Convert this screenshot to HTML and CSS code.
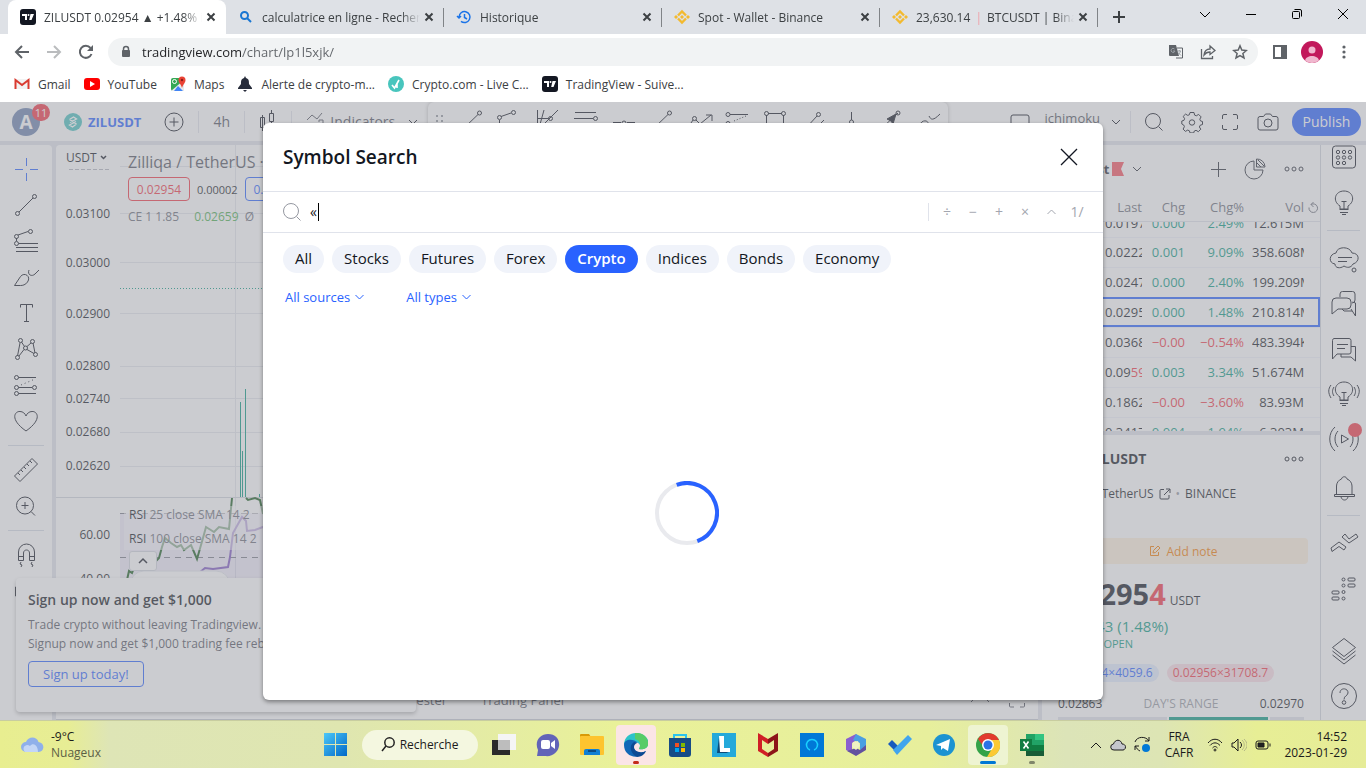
FILE: index.html
```
<!DOCTYPE html>
<html lang="en">
<head>
    <meta charset="utf-8">
    <title>ZILUSDT 0.02954</title>
    <link rel="stylesheet" href="styles.css">
</head>
<body>
    <!-- Browser tabs -->
    <div class="tab-strip">
        <button class="tab active">
            <svg class="fav" viewBox="0 0 16 16"><rect width="16" height="16" rx="3" fill="#131722"/><path d="M2 5h5v6H5V7H2zM10.500 5H14l-2.500 6H9.200z" fill="#fff"/><circle cx="8.500" cy="6" r="1" fill="#fff"/></svg>
            <span class="tab-title">ZILUSDT 0.02954 ▲ +1.48% ichimoku</span>
            <svg class="tab-close" viewBox="0 0 10 10"><path d="M1.500 1.500l7 7M8.500 1.500l-7 7"/></svg>
        </button>
        <button class="tab">
            <svg class="fav" viewBox="0 0 16 16"><circle cx="6.500" cy="6.500" r="3.500" fill="none" stroke="#1976d2" stroke-width="2"/><path d="M9 9l4 4" stroke="#1976d2" stroke-width="2"/></svg>
            <span class="tab-title">calculatrice en ligne - Recherche</span>
            <svg class="tab-close" viewBox="0 0 10 10"><path d="M1.500 1.500l7 7M8.500 1.500l-7 7"/></svg>
        </button>
        <button class="tab">
            <svg class="fav" viewBox="0 0 16 16" fill="none" stroke="#1a73e8" stroke-width="1.500"><path d="M3 8a5.500 5.500 0 1 1 2 4.300M1 7l2 2 2-2M8.500 5v3.500l2.500 1.500"/></svg>
            <span class="tab-title">Historique</span>
            <svg class="tab-close" viewBox="0 0 10 10"><path d="M1.500 1.500l7 7M8.500 1.500l-7 7"/></svg>
        </button>
        <button class="tab">
            <svg class="fav" viewBox="0 0 16 16"><g fill="none" stroke="#f3ba2f" stroke-width="2.400"><path d="M4 6.500l4-4 4 4M4 9.500l4 4 4-4"/></g><path d="M8 6l2 2-2 2-2-2zM2 6l2 2-2 2-2-2zM14 6l2 2-2 2-2-2z" fill="#f3ba2f"/></svg>
            <span class="tab-title">Spot - Wallet - Binance</span>
            <svg class="tab-close" viewBox="0 0 10 10"><path d="M1.500 1.500l7 7M8.500 1.500l-7 7"/></svg>
        </button>
        <button class="tab">
            <svg class="fav" viewBox="0 0 16 16"><g fill="none" stroke="#f3ba2f" stroke-width="2.400"><path d="M4 6.500l4-4 4 4M4 9.500l4 4 4-4"/></g><path d="M8 6l2 2-2 2-2-2zM2 6l2 2-2 2-2-2zM14 6l2 2-2 2-2-2z" fill="#f3ba2f"/></svg>
            <span class="tab-title">23,630.14 <i class="pink">|</i> BTCUSDT | Binance</span>
            <svg class="tab-close" viewBox="0 0 10 10"><path d="M1.500 1.500l7 7M8.500 1.500l-7 7"/></svg>
        </button>
        <button class="new-tab" aria-label="New tab"><svg width="14" height="14" viewBox="0 0 14 14"><path d="M7 1v12M1 7h12" stroke="#3c4043" stroke-width="2"/></svg></button>
        <div class="window-controls">
            <button aria-label="Tabs"><svg width="12" height="12" viewBox="0 0 12 12"><path d="M1 4l5 5 5-5"/></svg></button>
            <button aria-label="Minimize"><svg width="12" height="12" viewBox="0 0 12 12"><path d="M1 6.500h10"/></svg></button>
            <button aria-label="Restore"><svg width="12" height="12" viewBox="0 0 12 12"><rect x="1.500" y="3.500" width="7" height="7" rx="1"/><path d="M3.500 1.500H9a1.500 1.500 0 0 1 1.500 1.500v5.500"/></svg></button>
            <button aria-label="Close"><svg width="12" height="12" viewBox="0 0 12 12"><path d="M1 1l10 10M11 1L1 11"/></svg></button>
        </div>
    </div>

    <div class="toolbar">
        <button aria-label="Back"><svg width="16" height="16" viewBox="0 0 16 16"><path d="M15 8H2M8 2L2 8l6 6" fill="none" stroke="#5f6368" stroke-width="2"/></svg></button>
        <button aria-label="Forward"><svg width="16" height="16" viewBox="0 0 16 16"><path d="M1 8h13M8 2l6 6-6 6" fill="none" stroke="#babcbe" stroke-width="2"/></svg></button>
        <button aria-label="Reload"><svg width="16" height="16" viewBox="0 0 16 16"><path d="M13.500 10A6 6 0 1 1 12.500 4" fill="none" stroke="#5f6368" stroke-width="2"/><path d="M15 1v6H9z" fill="#5f6368"/></svg></button>
        <div class="address">
            <svg width="12" height="14" viewBox="0 0 12 14"><rect x="2" y="5" width="8" height="7" rx="1" fill="#5f6368"/><path d="M3.500 6V4a2.500 2.500 0 0 1 5 0v2" fill="none" stroke="#5f6368" stroke-width="1.500"/></svg>
            <input class="url" type="text" aria-label="Address" value="tradingview.com/chart/lp1l5xjk/">
            <button aria-label="Translate"><svg width="16" height="16" viewBox="0 0 16 16"><path d="M1 1h7l3 11H2a1 1 0 0 1-1-1z" fill="#5f6368"/><path d="M9 4h5.500v10H8" fill="none" stroke="#5f6368"/><path d="M6.500 5A2 2 0 1 0 7 7H5M9.500 7H13M12.500 7c-.5 2-1.500 3-2.500 3.500M10 8.500l3 3M11.300 6v1" fill="none" stroke="#9aa0a6"/></svg></button>
            <button aria-label="Share"><svg width="16" height="16" viewBox="0 0 16 16"><path d="M1.500 5v9.500h11V12M4 11c.5-4 3-6 6-6V2l5 4.500-5 4V8c-3 0-4.500 1-6 3z" fill="none" stroke="#5f6368" stroke-width="1.300"/></svg></button>
            <button aria-label="Bookmark"><svg width="16" height="16" viewBox="0 0 16 16"><path d="M8 1.800l1.800 4.300 4.600.4-3.500 3 1.100 4.500L8 11.600 4 14l1.100-4.500-3.500-3 4.600-.4z" fill="none" stroke="#5f6368" stroke-width="1.500"/></svg></button>
        </div>
        <button aria-label="Side panel"><svg width="16" height="16" viewBox="0 0 16 16"><rect x="2" y="2" width="12" height="12" fill="none" stroke="#5f6368" stroke-width="2"/><rect x="9" y="2" width="5" height="12" fill="#5f6368"/></svg></button>
        <button aria-label="Profile"><svg width="22" height="22" viewBox="0 0 22 22"><circle cx="11" cy="11" r="11" fill="#c2185b"/><circle cx="11" cy="9" r="3.500" fill="#f0b7ce"/><path d="M4 19.500c1-6 13-6 14 0a11 11 0 0 1-14 0z" fill="#f0b7ce"/></svg></button>
        <button aria-label="Menu"><svg width="16" height="16" viewBox="0 0 16 16" fill="#5f6368"><circle cx="8" cy="3" r="1.600"/><circle cx="8" cy="8" r="1.600"/><circle cx="8" cy="13" r="1.600"/></svg></button>
    </div>

    <nav class="bookmarks">
        <a href="#"><svg width="16" height="16" viewBox="0 0 16 16"><path d="M1 3h14v10H1z" fill="#f2f2f2"/><path d="M1.500 13V4L8 9l6.500-5v9" fill="none" stroke="#d93a30" stroke-width="2"/></svg>Gmail</a>
        <a href="#"><svg width="16" height="16" viewBox="0 0 16 16"><rect y="2" width="16" height="12" rx="3" fill="#f00"/><path d="M6 5l5 3-5 3z" fill="#fff"/></svg>YouTube</a>
        <a href="#"><svg width="16" height="16" viewBox="0 0 16 16"><rect x="1" y="2" width="13" height="13" rx="2" fill="#34a853"/><path d="M1 15L14 4v11z" fill="#e8eaed"/><path d="M4 15l4-5 5 5z" fill="#4285f4"/><circle cx="4.500" cy="5.500" r="2" fill="none" stroke="#fff"/><path d="M12 12C11 8 8.500 7 8.500 4a3.500 3.500 0 0 1 7 0c0 3-2.500 4-3.500 8z" fill="#ea4335"/><circle cx="12" cy="4" r="1.200" fill="#8c1d18"/></svg>Maps</a>
        <a href="#"><svg width="16" height="16" viewBox="0 0 16 16"><path d="M8 0l1 2c3 1 3 3 3 6l3 4v1H1v-1l3-4c0-3 0-5 3-6zM6 14h4l-2 2z" fill="#262b3a"/></svg>Alerte de crypto-m...</a>
        <a href="#"><svg width="16" height="16" viewBox="0 0 16 16"><circle cx="8" cy="8" r="8" fill="#48c5bd"/><path d="M4 9l2.500 3L11 4M9 12V8" fill="none" stroke="#fff" stroke-width="1.600"/></svg>Crypto.com - Live C...</a>
        <a href="#"><svg width="16" height="16" viewBox="0 0 16 16"><rect width="16" height="16" rx="3" fill="#131722"/><path d="M2 5h5v6H5V7H2zM10.500 5H14l-2.500 6H9.200z" fill="#fff"/><circle cx="8.500" cy="6" r="1" fill="#fff"/></svg>TradingView - Suive...</a>
    </nav>

    <div class="app">
        <header class="app-header">
            <button class="avatar">A<span class="badge">11</span></button>
            <button class="symbol"><svg width="18" height="18" viewBox="0 0 18 18"><circle cx="9" cy="9" r="9" fill="#49c1bf"/><path d="M5.500 6.500l4-2.500 3 2-6.500 3.500M12.500 11l-4 3-3-2 6.500-3.500M5.500 6.500l7 4.500" fill="none" stroke="#fff" stroke-width="1.300"/></svg>ZILUSDT</button>
            <button class="add" aria-label="Compare"><svg width="20" height="20" viewBox="0 0 20 20"><circle cx="10" cy="10" r="9"/><path d="M10 5.500v9M5.500 10h9"/></svg></button>
            <i class="sep"></i>
            <button class="interval">4h</button>
            <i class="sep"></i>
            <button class="candles" aria-label="Candles"><svg width="28" height="28" viewBox="0 0 28 28"><path d="M8.500 7v16M6.500 9.500h4v10h-4zM17.500 2v3M17.500 13v5M15.500 5.500h4v8h-4z" /></svg></button>
            <i class="sep"></i>
            <button class="indicators"><svg width="28" height="28" viewBox="0 0 28 28"><path d="M5 12l5-5 5 4 5-6M17 14v-2h4v8M5 20l4-4"/></svg>Indicators</button>
            <svg class="chev" width="10" height="10" viewBox="0 0 10 10"><path d="M1 3l4 4 4-4"/></svg>
            <div class="fav-tools">
                <svg class="grip" width="8" height="14" viewBox="0 0 8 14"><path d="M0 0h2v2H0zM5 0h2v2H5zM0 5h2v2H0zM5 5h2v2H5zM0 10h2v2H0zM5 10h2v2H5z" stroke="none" fill="#9598a1"/></svg>
                <button aria-label="Trend line"><svg width="28" height="28" viewBox="0 0 28 28"><path d="M20 6.500L6 20"/><circle cx="21.500" cy="5" r="2"/></svg></button>
                <button aria-label="Pitchfork"><svg width="28" height="28" viewBox="0 0 28 28"><path d="M5 8.500l10-3.500M3.500 12v8"/><circle cx="3.500" cy="9.500" r="2"/><circle cx="17.500" cy="4.500" r="2"/></svg></button>
                <button aria-label="Gann"><svg width="28" height="28" viewBox="0 0 28 28"><path d="M3.500 2v18M10 2L5 20M3.500 10.500h11M24 2L8 18"/><circle cx="16.500" cy="10.500" r="2"/></svg></button>
                <button aria-label="Channel"><svg width="28" height="28" viewBox="0 0 28 28"><path d="M3 4.500h21M2 10.500h19"/><circle cx="23.500" cy="10.500" r="2"/></svg></button>
                <button aria-label="Horizontal line"><svg width="28" height="28" viewBox="0 0 28 28"><path d="M3 14.500h8M17 14.500h8"/><circle cx="14" cy="15" r="2"/></svg></button>
                <button aria-label="Ray"><svg width="28" height="28" viewBox="0 0 28 28"><path d="M20 6.500L6 20"/><circle cx="21.500" cy="5" r="2"/></svg></button>
                <button aria-label="Elliott"><svg width="28" height="28" viewBox="0 0 28 28"><path d="M7 12l-4 6M10 12l4 4L25 7M20 7h6v6"/><circle cx="8.500" cy="10.500" r="2"/></svg></button>
                <button aria-label="Fib"><svg width="28" height="28" viewBox="0 0 28 28"><path d="M6 6.500h18M6 15.500h10"/><path d="M10 13l12-5" stroke-dasharray="1 2"/><circle cx="4" cy="6.500" r="2"/><circle cx="4" cy="15.500" r="2"/></svg></button>
                <button aria-label="Rectangle"><svg width="28" height="28" viewBox="0 0 28 28"><path d="M6 5.500h14M4.500 7v14M21.500 7v14"/><circle cx="4.500" cy="5.500" r="2"/><circle cx="21.500" cy="5.500" r="2"/></svg></button>
                <button aria-label="Parallel"><svg width="28" height="28" viewBox="0 0 28 28"><path d="M17 8L6 20M24 12l-8 8"/><circle cx="18.500" cy="6.500" r="2"/></svg></button>
                <button aria-label="Vertical line"><svg width="28" height="28" viewBox="0 0 28 28"><path d="M13.500 4v8"/><circle cx="13.500" cy="14" r="2"/></svg></button>
                <button aria-label="Arrow"><svg width="28" height="28" viewBox="0 0 28 28"><path d="M6 20L22 5"/><path d="M20 6l-3 10-2-3-4-2z" fill="#131722"/><circle cx="22" cy="5" r="2"/></svg></button>
                <button aria-label="Brush"><svg width="28" height="28" viewBox="0 0 28 28"><path d="M5 20c1-9 9-8 9-5M15 8c2 4 4 5 11-2"/></svg></button>
            </div>
            <svg class="layout" width="20" height="16" viewBox="0 0 20 16"><rect x="1" y="1" width="18" height="14" rx="2"/></svg>
            <button class="layout-name">ichimoku</button>
            <svg class="chev" width="10" height="10" viewBox="0 0 10 10"><path d="M1 3l4 4 4-4"/></svg>
            <i class="sep"></i>
            <button aria-label="Search"><svg width="20" height="20" viewBox="0 0 20 20"><circle cx="9" cy="9" r="7.500"/><path d="M14.500 14.500l4 4"/></svg></button>
            <button aria-label="Settings"><svg width="22" height="22" viewBox="0 0 22 22"><path d="M9 1.500h4l.6 2.600 1.700.7 2.300-1.400 2.500 2.500-1.300 2.300.7 1.700 2 .6v3l-2.400.8-.7 1.700 1.400 2.200-2.500 2.500-2.300-1.400-1.700.7-.6 1.900H9l-.6-2.100-1.700-.7-2.300 1.300-2.300-2.300 1.300-2.400-.7-1.700L.8 13v-3l2.100-.6.7-1.700-1.400-2.300 2.300-2.300 2.300 1.300 1.600-.7z"/><circle cx="11" cy="11.500" r="2.700"/></svg></button>
            <button aria-label="Fullscreen"><svg width="18" height="18" viewBox="0 0 18 18"><path d="M1.500 6V3a1.500 1.500 0 0 1 1.500-1.500h3M12 1.500h3A1.500 1.500 0 0 1 16.500 3v3M16.500 12v3a1.500 1.500 0 0 1-1.500 1.500h-3M6 16.500H3A1.500 1.500 0 0 1 1.500 15v-3"/></svg></button>
            <button aria-label="Snapshot"><svg width="22" height="18" viewBox="0 0 22 18"><path d="M3 3.500h3.500l2-2.500h5l2 2.500H19a2 2 0 0 1 2 2V15a2 2 0 0 1-2 2H3a2 2 0 0 1-2-2V5.500a2 2 0 0 1 2-2z"/><circle cx="11" cy="10" r="4"/></svg></button>
            <button class="publish">Publish</button>
        </header>

        <div class="app-body">
            <aside class="draw-bar">
                <button aria-label="Cross"><svg width="28" height="28" viewBox="0 0 28 28" class="blue"><path d="M14.500 3v8M14.500 18v8M3 14.500h8M18 14.500h8"/></svg></button>
                <button aria-label="Trend line"><svg width="28" height="28" viewBox="0 0 28 28"><path d="M7 21L21 7"/><circle cx="5.500" cy="22.500" r="2"/><circle cx="22.500" cy="5.500" r="2"/></svg></button>
                <button aria-label="Fib"><svg width="28" height="28" viewBox="0 0 28 28"><path d="M6 8l10-3.500M4.500 11v3M6.500 16.500H26M4 20.500h22M4 24.500h22"/><circle cx="4.500" cy="9.500" r="2"/><circle cx="18.500" cy="4.500" r="2"/><circle cx="4.500" cy="16.500" r="2"/></svg></button>
                <button aria-label="Brush"><svg width="28" height="28" viewBox="0 0 28 28"><path d="M2.500 22.500l6-9c4-5 11 0 7 5.500-2 3-5 3.500-7 3.500zM17 7c-2 5 3 7 6 4l4-4"/></svg></button>
                <button aria-label="Text"><svg width="28" height="28" viewBox="0 0 28 28"><path d="M8.500 8.500v-3h12v3M14.500 5.500v17M12 22.500h5"/></svg></button>
                <button aria-label="Patterns"><svg width="28" height="28" viewBox="0 0 28 28"><path d="M8 8L5.500 21M9.500 7l3 4.500M15 14.500l7 4M7 21l5-6.500M15 11.500L19 8M21 8l2 10"/><circle cx="8.500" cy="5.500" r="2"/><circle cx="20.500" cy="6.500" r="2"/><circle cx="5.500" cy="22.500" r="2"/><circle cx="23.500" cy="19.500" r="2"/><circle cx="13.500" cy="13" r="2"/></svg></button>
                <button aria-label="Prediction"><svg width="28" height="28" viewBox="0 0 28 28"><path d="M6.500 6.500H24M6.500 16.500H20M6.500 22.500H24"/><path d="M9 14l14-6" stroke-dasharray="1 3"/><circle cx="4.500" cy="6.500" r="2"/><circle cx="4.500" cy="16.500" r="2"/><circle cx="22.500" cy="16.500" r="2"/><circle cx="4.500" cy="22.500" r="2"/></svg></button>
                <button aria-label="Icons"><svg width="28" height="28" viewBox="0 0 28 28"><path d="M14 24C-3 12 3 4 8 4.500c3 0 5 2 6 4.500 1-2.500 3-4.500 6-4.500 5-.5 11 7.500-6 19.500z"/></svg></button>
                <hr>
                <button aria-label="Measure"><svg width="28" height="28" viewBox="0 0 28 28"><path d="M2.500 20L20 2.500l5.500 5.500L8 25.500zM6 17l2 2M9 14l2 2M12 11l2 2M15 8l2 2M18 5l2 2"/></svg></button>
                <button aria-label="Zoom"><svg width="28" height="28" viewBox="0 0 28 28"><circle cx="13" cy="13.500" r="8.500"/><path d="M13 10v7M9.500 13.500h7M19 19.500l4 4"/></svg></button>
                <hr>
                <button aria-label="Magnet"><svg width="28" height="28" viewBox="0 0 28 28"><path d="M6.500 19.500V11a8 8 0 0 1 16 0v8.500h-5V12c0-4-6-4-6 0v7.500zM6.500 15.500h5M17.500 15.500h5M9 21l-1 2 2 1-1 2M20 21l-1 2 2 1-1 2"/></svg></button>
                <button aria-label="Lock"><svg width="28" height="28" viewBox="0 0 28 28"><path d="M3.500 10v9h20v-9zM8 10V7"/></svg></button>
            </aside>

            <main class="chart">
                <div class="panes">
                    <svg class="plot" width="982" height="548" viewBox="56 145 982 548">
                        <g stroke="#e4e6ec">
                            <path d="M120 166.500h918M120 213.500h918M120 262.500h918M120 313.500h918M120 366.500h918M120 398.500h918M120 432.500h918M120 466.500h918M235.500 145v548"/>
                            <path d="M56 497.500h982" stroke="#d1d4dc"/>
                        </g>
                        <path d="M69 169.500h41" stroke="#b2b5be" stroke-dasharray="4 2"/>
                        <path d="M120 288.500h918" stroke="#089981" stroke-dasharray="1 2"/>
                        <path d="M240.500 402v95M242.500 451v46M245.500 389v108M259.500 494v3" stroke="#089981"/>
                        <rect x="120" y="513" width="918" height="110" fill="#7e57c2" opacity=".12" stroke="none"/>
                        <path d="M120 513.500h918M120 557.500h918" stroke="#787b86" stroke-dasharray="6 5"/>
                        <path class="rsi" stroke="#1b5e20" d="M127 580l2-9 3 2 8-21h10l7 8 2-2 3-11 3-9 6 5 6 4 4-2 3 5 7-5 6 14 6-21 3-11 8 5 5-5 10 2 3-31M246 498l2 2 7-2 5 2 3 14"/>
                        <path class="rsi" stroke="#7e57c2" d="M199 573l6-5 8 1 15-2 2-10 3-24 9-16 4 4 1 10 8-1 8-3 4 3"/>
                        <rect x="124" y="506" width="142" height="44" fill="#fff" opacity=".5" stroke="none"/>
                        <rect x="130" y="571" width="100" height="40" rx="14" fill="#fff" stroke="#e0e3eb"/>
                        <g class="axis">
                            <text x="110" y="218">0.03100</text><text x="110" y="267">0.03000</text><text x="110" y="318">0.02900</text><text x="110" y="370">0.02800</text><text x="110" y="403">0.02740</text><text x="110" y="436">0.02680</text><text x="110" y="470">0.02620</text><text x="110" y="539">60.00</text><text x="110" y="583">40.00</text>
                        </g>
                    </svg>
                    <button class="currency">USDT<svg width="7" height="7" viewBox="0 0 7 7"><path d="M1 2l2.500 2.500L6 2" stroke-width="1.500"/></svg></button>
                    <div class="legend">
                        <div class="legend-title">Zilliqa / TetherUS ·</div>
                        <div class="quotes"><button class="sell">0.02954</button><span>0.00002</span><button class="buy">0.02956</button></div>
                        <div class="study"><span>CE</span> 1 1.85 <b>0.02659</b> Ø</div>
                    </div>
                    <div class="rsi-legend">
                        <div>RSI <span>25 close SMA 14 2</span></div>
                        <div>RSI <span>100 close SMA 14 2</span></div>
                        <button class="collapse" aria-label="Collapse"><svg width="10" height="10" viewBox="0 0 10 10"><path d="M1 7l4-4 4 4" stroke-width="1.500"/></svg></button>
                    </div>
                </div>
                <div class="bottom-bar">
                    <button>Strategy Tester</button><button>Trading Panel</button>
                    <svg class="up" width="20" height="20" viewBox="0 0 20 20"><path d="M1 12l9-9 9 9"/></svg>
                    <svg width="18" height="18" viewBox="0 0 18 18"><path d="M1.500 6V1.500H6M12 1.500h4.500V6M16.500 12v3a1 1 0 0 1-1 1H12M6 16H2.500a1 1 0 0 1-1-1v-3"/></svg>
                </div>
            </main>

            <section class="widget">
                <div class="watch-head">
                    <b>Watchlist</b>
                    <svg width="12" height="14" viewBox="0 0 12 14"><path d="M0 0h12L9 7l3 7H0z" fill="#f7525f" stroke="none"/></svg>
                    <svg class="chev" width="10" height="10" viewBox="0 0 10 10"><path d="M1 3l4 4 4-4"/></svg>
                    <svg class="plus" width="16" height="16" viewBox="0 0 16 16"><path d="M8.500 1v15M1 8.500h15"/></svg>
                    <svg width="22" height="22" viewBox="0 0 22 22"><path d="M10 3a9 9 0 1 0 9 9h-9z"/><path d="M12.500 1v8H21a8 8 0 0 0-8.500-8zM13 5l4 4M14 2l6 6"/></svg>
                    <svg width="20" height="8" viewBox="0 0 20 8"><circle cx="3" cy="4" r="2"/><circle cx="10" cy="4" r="2"/><circle cx="17" cy="4" r="2"/></svg>
                </div>
                <table class="watchlist">
                    <thead><tr><th></th><th>Last</th><th>Chg</th><th>Chg%</th><th>Vol</th><th><svg width="11" height="12" viewBox="0 0 11 12"><path d="M3 3.500a4.300 4.300 0 1 1-2 3M5.500 1L3 3.500 5.500 6"/></svg></th></tr></thead>
                    <tbody>
                        <tr class="cut top"><td></td><td><span>0.01975</span></td><td class="up"><span>0.000</span></td><td class="up"><span>2.49%</span></td><td><span>12.615M</span></td><td></td></tr>
                        <tr><td></td><td><span>0.02225</span></td><td class="up"><span>0.001</span></td><td class="up"><span>9.09%</span></td><td><span>358.608M</span></td><td></td></tr>
                        <tr><td></td><td><span>0.02475</span></td><td class="up"><span>0.000</span></td><td class="up"><span>2.40%</span></td><td><span>199.209M</span></td><td></td></tr>
                        <tr class="selected"><td></td><td><span>0.02954</span></td><td class="up"><span>0.000</span></td><td class="up"><span>1.48%</span></td><td><span>210.814M</span></td><td></td></tr>
                        <tr><td></td><td><span>0.03685</span></td><td class="down"><span>−0.00</span></td><td class="down"><span>−0.54%</span></td><td><span>483.394K</span></td><td></td></tr>
                        <tr><td></td><td><span>0.09<em>59</em></span></td><td class="up"><span>0.003</span></td><td class="up"><span>3.34%</span></td><td><span>51.674M</span></td><td></td></tr>
                        <tr><td></td><td><span>0.18625</span></td><td class="down"><span>−0.00</span></td><td class="down"><span>−3.60%</span></td><td><span>83.93M</span></td><td></td></tr>
                        <tr class="cut"><td></td><td><span>0.34175</span></td><td class="up"><span>0.004</span></td><td class="up"><span>1.94%</span></td><td><span>6.303M</span></td><td></td></tr>
                    </tbody>
                </table>
                <div class="details">
                    <div class="d-head"><b>ZILUSDT</b><svg width="20" height="8" viewBox="0 0 20 8"><circle cx="3" cy="4" r="2"/><circle cx="10" cy="4" r="2"/><circle cx="17" cy="4" r="2"/></svg></div>
                    <div class="d-name">Zilliqa / TetherUS <svg width="12" height="12" viewBox="0 0 12 12"><path d="M5 1.500H2a1 1 0 0 0-1 1V10a1 1 0 0 0 1 1h7a1 1 0 0 0 1-1V7M7 1h4v4M11 1L5 7"/></svg> <i>•</i> BINANCE</div>
                    <button class="note"><svg width="12" height="12" viewBox="0 0 12 12"><path d="M5 1.500H1.500v9h8V7M4 8l.5-2.500L9 1l2 2-4.500 4.500z"/></svg>Add note</button>
                    <div class="price">0.0295<em>4</em><small>USDT</small></div>
                    <div class="change">0.00043 (1.48%)</div>
                    <div class="market">MARKET OPEN</div>
                    <div class="book"><span class="bid">0.02954×4059.6</span><span class="ask">0.02956×31708.7</span></div>
                    <div class="range"><span>0.02863</span><i>DAY'S RANGE</i><span>0.02970</span></div>
                    <div class="range-bar"><i></i></div>
                </div>
            </section>

            <aside class="side-bar">
                <button aria-label="Calendar"><svg width="28" height="28" viewBox="0 0 28 28"><rect x="2.500" y="3" width="23" height="22" rx="3"/><circle cx="8" cy="9" r="1.700"/><circle cx="14" cy="9" r="1.700"/><circle cx="20" cy="9" r="1.700"/><circle cx="8" cy="14.500" r="1.700"/><circle cx="14" cy="14.500" r="1.700"/><circle cx="20" cy="14.500" r="1.700"/><circle cx="8" cy="20" r="1.700"/><circle cx="14" cy="20" r="1.700"/></svg></button>
                <button aria-label="Ideas"><svg width="28" height="28" viewBox="0 0 28 28"><path d="M10 20v-3c-8-5-5-15 4-15s12 10 4 15v3zM14 20v-8M11.500 12.500h5M9.500 20.500h9M10 23.500h8M12 25.500h4"/></svg></button>
                <hr>
                <button aria-label="Minds"><svg width="30" height="28" viewBox="0 0 30 28"><path d="M7 8c1-7 14-7 16 0 8 0 8 9 1 11-2 4-6 4-9 2-4 3-9 2-9-2-7-1-6-10 1-11zM9 12.500h14M9 16.500h9"/><circle cx="25" cy="25" r="2"/></svg></button>
                <button aria-label="Chats"><svg width="28" height="28" viewBox="0 0 28 28"><path d="M10 7V4a2.500 2.500 0 0 1 2.500-2.500h10A2.500 2.500 0 0 1 25 4v6a3 3 0 0 1-3 3M6 8h11a4 4 0 0 1 4 4v3a4 4 0 0 1-4 4H8l-6 5V12a4 4 0 0 1 4-4zM21 19l4.500 7V13l-3-1M12 19l2 2h8"/></svg></button>
                <button aria-label="Chat"><svg width="28" height="28" viewBox="0 0 28 28"><path d="M4 3.500h15a2 2 0 0 1 2 2V17a2 2 0 0 1-2 2H7l-4.500 5V5.500a2 2 0 0 1 1.500-2zM7 9.500h11M7 13.500h8M21 11.500h4.500V26L21 22H11v-3"/></svg></button>
                <button aria-label="Stream ideas"><svg width="32" height="28" viewBox="0 0 32 28"><path d="M12 20v-3c-8-5-5-15 4-15s12 10 4 15v3zM16 20v-8M13.500 12.500h5M11.500 20.500h9M12 23.500h8M14 25.500h4M3 5c-3 4-3 8 0 13M6 7c-2 3-2 6 0 9M29 5c3 4 3 8 0 13M26 7c2 3 2 6 0 9"/></svg></button>
                <button aria-label="Streams" class="streams"><svg width="32" height="28" viewBox="0 0 32 28"><path d="M13.500 10v8l7-4zM7 2C0 8 0 20 7 26M10 6c-4 4-4 12 0 16M25 2c7 6 7 18 0 24M22 6c4 4 4 12 0 16"/></svg><span class="dot"></span></button>
                <button aria-label="Notifications" class="bell"><svg width="28" height="28" viewBox="0 0 28 28"><path d="M6.500 20.500V12c0-3 2-6 5-7 .5-3 5-3 5.500 0 3 1 5 4 5 7v8.500M4.500 20.500h20v2h-20zM11 23c1 4 6 4 7 0"/></svg></button>
                <hr>
                <button aria-label="Order"><svg width="30" height="28" viewBox="0 0 30 28"><path d="M2 18l8-6 7 5-2 3-5-3.500-7 5zM13 7l7 6 9-6-2-3-7 5-4-5z"/></svg></button>
                <button aria-label="DOM"><svg width="28" height="28" viewBox="0 0 28 28"><rect x="18" y="3" width="7" height="3" rx="1"/><rect x="18" y="9" width="7" height="3" rx="1"/><rect x="2" y="16" width="7" height="3" rx="1"/><rect x="2" y="22" width="7" height="3" rx="1"/><circle cx="13.500" cy="4.500" r="1.500"/><circle cx="13.500" cy="10.500" r="1.500"/><circle cx="13.500" cy="17" r="1.500"/><circle cx="13.500" cy="23.500" r="1.500"/></svg></button>
                <button aria-label="Objects" class="last"><svg width="28" height="28" viewBox="0 0 28 28"><path d="M14 1.500l11.500 9L14 19.500 2.500 10.500zM2.500 14L14 23l11.500-9M2.500 18L14 27l11.500-9"/></svg></button>
                <button aria-label="Help"><svg width="28" height="28" viewBox="0 0 28 28"><circle cx="14" cy="14" r="12.500"/><path d="M10 11c0-6 8.500-5 8 0-.3 3-4 2.500-4 6.500"/><circle cx="14" cy="20.500" r="1.800"/></svg></button>
            </aside>
        </div>

        <div class="toast">
            <b>Sign up now and get $1,000</b>
            <p>Trade crypto without leaving Tradingview.<br>Signup now and get $1,000 trading fee rebate.</p>
            <button>Sign up today!</button>
        </div>

        <div class="backdrop">
            <div class="modal" role="dialog" aria-label="Symbol Search">
                <div class="modal-header">
                    <h2>Symbol Search</h2>
                    <button aria-label="Close"><svg width="18" height="18" viewBox="0 0 18 18"><path d="M1 1l16 16M17 1L1 17" stroke-width="1.300"/></svg></button>
                </div>
                <div class="search-row">
                    <svg class="lens" width="20" height="20" viewBox="0 0 20 20"><circle cx="9" cy="9" r="7.500"/><path d="M14.500 14.500l4 4"/></svg>
                    <div class="field"><input type="text" aria-label="Search" value="«"><span class="caret"></span></div>
                    <div class="ops"><button>÷</button><button>−</button><button>+</button><button>×</button><button aria-label="Power"><svg width="9" height="6" viewBox="0 0 9 6"><path d="M.500 5l4-4 4 4"/></svg></button><button>1/</button></div>
                </div>
                <div class="pills">
                    <button>All</button><button>Stocks</button><button>Futures</button><button>Forex</button><button class="on">Crypto</button><button>Indices</button><button>Bonds</button><button>Economy</button>
                </div>
                <div class="filters">
                    <button>All sources<svg width="9" height="6" viewBox="0 0 9 6"><path d="M.500 1l4 4 4-4"/></svg></button>
                    <button>All types<svg width="9" height="6" viewBox="0 0 9 6"><path d="M.500 1l4 4 4-4"/></svg></button>
                </div>
                <div class="loading">
                    <svg width="64" height="64" viewBox="0 0 64 64"><circle cx="32" cy="32" r="30" stroke="#e9eaee" stroke-width="4"/><path d="M21.700 3.800A30 30 0 0 1 42.300 60.200" stroke="#2962ff" stroke-width="4"/></svg>
                </div>
            </div>
        </div>
    </div>

    <footer class="taskbar">
        <div class="weather">
            <svg width="24" height="18" viewBox="0 0 24 18"><path d="M6 16a5 5 0 0 1 0-10c2-6 11-6 12.500 0 7 1 6 10 0 10z" fill="#8fb0ea"/><path d="M5 16c-4-4 1-9 5-6 3-4 8-1 8 6z" fill="#c3d6f6"/></svg>
            <div>-9°C<span>Nuageux</span></div>
        </div>
        <div class="task-center">
            <button class="start" aria-label="Start"><svg width="23" height="23" viewBox="0 0 23 23"><defs><linearGradient id="win" x1="0" y1="0" x2="1" y2="1"><stop offset="0" stop-color="#4cc8f8"/><stop offset="1" stop-color="#0068c8"/></linearGradient></defs><path d="M0 0h11v11H0zM12 0h11v11H12zM0 12h11v11H0zM12 12h11v11H12z" fill="url(#win)"/></svg></button>
            <button class="win-search"><svg width="14" height="15" viewBox="0 0 14 15"><circle cx="8.500" cy="5.500" r="4.700" fill="none" stroke="#222" stroke-width="1.500"/><path d="M5 9l-4 5" stroke="#222" stroke-width="1.500"/></svg>Recherche</button>
            <button class="task" aria-label="Task view"><svg width="24" height="24" viewBox="0 0 24 24"><rect x="0" y="7" width="18" height="15" fill="#2b2b2b"/><rect x="6" y="1" width="18" height="16" fill="#f5f5f5"/><rect x="6" y="7" width="12" height="10" fill="#bdbdbd"/></svg></button>
            <button class="task" aria-label="Chat"><svg width="24" height="24" viewBox="0 0 24 24"><path d="M1 23l1-6C-2 8 4 1 12 1s12 6 11 12-6 11-14 10z" fill="#6264b8"/><rect x="5" y="7" width="9" height="9" rx="2" fill="#fff"/><path d="M15 10l4-3v9l-4-3z" fill="#fff"/></svg></button>
            <button class="task" aria-label="Files"><svg width="24" height="24" viewBox="0 0 24 24"><path d="M0 4V2a1 1 0 0 1 1-1h8l2 3z" fill="#d99a07"/><rect y="3" width="24" height="19" rx="1" fill="#fdc42f"/><path d="M4 22v-4a2 2 0 0 1 2-2h12a2 2 0 0 1 2 2v4z" fill="#1080d4"/><path d="M8 18h8" stroke="#0a4b86" stroke-width="2"/></svg></button>
            <button class="task edge" aria-label="Edge"><svg width="24" height="24" viewBox="0 0 24 24"><path d="M0 12C0 4 6 0 12 0c8 0 14 6 12 12-1 4-6 5-9 4 1-2 2-4-1-6-4-3-10-3-14 2z" fill="#2dc3c9"/><path d="M11 0c8-1 14 5 13 12-1 4-6 5-9 4 3-7-1-9-4-10z" fill="#57cc68"/><path d="M0 12c0-6 9-7 14-2-4-1-6 3-4 6 2 4 7 5 12 2-7 10-22 6-22-6z" fill="#1267b6"/><path d="M10 9c-6 4-3 12 3 15 4 0 8-3 9-6-6 3-12 0-12-4 0-2 1-3 3-4z" fill="#0c4a93"/></svg></button>
            <button class="task" aria-label="Store"><svg width="24" height="24" viewBox="0 0 24 24"><path d="M6 6V2h12v4" fill="none" stroke="#2bc4ee" stroke-width="2"/><path d="M1 5h22v16a3 3 0 0 1-3 3H4a3 3 0 0 1-3-3z" fill="#174c86"/><path d="M7 10h4v4H7z" fill="#f25022"/><path d="M13 10h4v4h-4z" fill="#7fba00"/><path d="M7 15h4v4H7z" fill="#00a4ef"/><path d="M13 15h4v4h-4z" fill="#ffb900"/></svg></button>
            <button class="task" aria-label="L"><svg width="24" height="24" viewBox="0 0 24 24"><path d="M0 0h24v24H0z" fill="#24a9da"/><path d="M7 4L5 20h12l-8-3z" fill="#0b4a78"/><path d="M7 3h5v12h6v4H8z" fill="#fff"/></svg></button>
            <button class="task" aria-label="McAfee"><svg width="24" height="24" viewBox="0 0 24 24"><path d="M12 6L2 0v18l10 6v-4l-6-4V7l6 4z" fill="#d01f26"/><path d="M12 6l10-6v18l-10 6v-4l6-4V7l-6 4z" fill="#8d1519"/></svg></button>
            <button class="task" aria-label="Alexa"><svg width="24" height="24" viewBox="0 0 24 24"><path d="M0 0h24v24H0z" fill="#0078d7"/><path d="M10 17a5.500 5.500 0 1 1 4 0" fill="none" stroke="#19d0ff" stroke-width="1.500"/></svg></button>
            <button class="task" aria-label="Office"><svg width="24" height="24" viewBox="0 0 24 24"><path d="M12 1L2 6v11l6 3V10l8-5z" fill="#8a5fd0"/><path d="M12 1l10 5v9l-6 2V10L9 7z" fill="#4b9fe2"/><path d="M22 12v5l-10 6-9-5 9-3 4 2z" fill="#62519f"/><path d="M9 9l5-1 2 5-4 4-4-3z" fill="#f0f3c4"/></svg></button>
            <button class="task" aria-label="To Do"><svg width="24" height="24" viewBox="0 0 24 24"><path d="M0 11l4-4 8 8-4 4z" fill="#185abd"/><path d="M5 17L20 2l4 4-15 16z" fill="#41a5ee"/></svg></button>
            <button class="task" aria-label="Telegram"><svg width="24" height="24" viewBox="0 0 24 24"><circle cx="12" cy="12" r="11" fill="#1c93d1"/><path d="M4 12l14-6-2 12-5-3-2 2v-4z" fill="#fff"/></svg></button>
            <button class="task chrome" aria-label="Chrome"><svg width="24" height="24" viewBox="0 0 24 24"><circle cx="12" cy="12" r="12" fill="#34a348"/><path d="M2 6a12 12 0 0 1 21 1H12a5 5 0 0 0-5 6z" fill="#e23b2e"/><path d="M23 7a12 12 0 0 1-12 17l6-10a6 6 0 0 0-3-7z" fill="#fcc934"/><circle cx="12" cy="12" r="6" fill="#fff"/><circle cx="12" cy="12" r="4.500" fill="#2a72e5"/></svg></button>
            <button class="task excel" aria-label="Excel"><svg width="24" height="24" viewBox="0 0 24 24"><path d="M6 1h18v22H6z" fill="#21a366"/><path d="M15 1h9v6h-9z" fill="#33c481"/><path d="M6 12h18v11H6z" fill="#107c41"/><path d="M6 18h18v5H6z" fill="#185c37"/><path d="M0 6h12v12H0z" fill="#107c41"/><path d="M3.500 8.500l5 7M8.500 8.500l-5 7" stroke="#fff" stroke-width="1.600"/></svg></button>
        </div>
        <div class="tray">
            <svg width="12" height="12" viewBox="0 0 12 12"><path d="M1 9l5-5 5 5"/></svg>
            <svg width="16" height="12" viewBox="0 0 16 12"><path d="M4 11a3 3 0 0 1-.5-6C5 0 11 0 12 5c5 0 4 6 1 6z" fill="#c4c6cc"/></svg>
            <svg width="17" height="17" viewBox="0 0 17 17"><path d="M1 6c2-6 11-6 14-1M15 1v4h-4M6 15c-2-1-4-3-4.500-5M1 14v-4h4"/><circle cx="12" cy="12" r="4" fill="#0078d7" stroke="none"/></svg>
            <div class="lang">FRA<br>CAFR</div>
            <svg width="16" height="14" viewBox="0 0 16 14"><path d="M1 5c4-5 10-5 14 0M3 7.500c3-3.500 7-3.500 10 0M5.500 10c2-2 3-2 5 0"/><circle cx="8" cy="12" r="1"/></svg>
            <svg width="16" height="14" viewBox="0 0 16 14"><path d="M1 5h2l4-4v12L3 9H1zM9 4c2 2 2 4 0 6"/><path d="M11 2c3 3 3 7 0 10M13 1c4 4 4 8 0 12" stroke="#b5b985"/></svg>
            <svg width="16" height="10" viewBox="0 0 16 10"><rect x="1" y="1" width="12" height="8" rx="2"/><path d="M3 3h6v4H3z" fill="#222"/><path d="M15 3.500v3"/></svg>
            <div class="clock">14:52<br>2023-01-29</div>
        </div>
    </footer>
</body>
</html>
```
FILE: styles.css
```
* {
    box-sizing: border-box;
}

body {
    margin: 0;
    height: 100vh;
    display: flex;
    flex-direction: column;
    overflow: hidden;
    font-family: "Segoe UI", "Open Sans", sans-serif;
    font-size: 12px;
    color: #3c4043;
}

button {
    display: flex;
    align-items: center;
    justify-content: center;
    flex: none;
    padding: 0;
    border: none;
    background: none;
    font: inherit;
    color: inherit;
    white-space: nowrap;
}

svg {
    flex: none;
}

/* browser */
.tab-strip {
    display: flex;
    flex: none;
    height: 34px;
    padding-left: 8px;
    background: #dee1e6;
}

.tab {
    position: relative;
    width: 218px;
    gap: 8px;
    padding: 0 10px 0 12px;
    text-align: left;
}

.tab:not(.active)::after {
    content: "";
    position: absolute;
    right: 0;
    top: 8px;
    height: 19px;
    border-right: 1px solid #808387;
}

.tab.active {
    background: #fff;
    border-radius: 8px 8px 0 0;
}

.fav {
    width: 16px;
    height: 16px;
}

.tab-title {
    flex: 1;
    margin-right: -4px;
    overflow: hidden;
    mask-image: linear-gradient(to right, #000 88%, transparent);
}

.pink {
    color: #f0a0a8;
    font-style: normal;
    margin: 0 2px;
}

.tab-close {
    width: 10px;
    height: 10px;
    stroke: #3c4043;
    stroke-width: 2;
}

.new-tab {
    width: 42px;
}

.window-controls {
    display: flex;
    margin-left: auto;
    height: 28px;
}

.window-controls button {
    width: 46px;
}

.window-controls svg {
    fill: none;
    stroke: #000;
}

.toolbar {
    display: flex;
    flex: none;
    align-items: center;
    height: 36px;
    padding: 0 6px;
}

.toolbar button {
    width: 32px;
}

.address {
    display: flex;
    align-items: center;
    flex: 1;
    height: 28px;
    margin: 0 6px;
    padding: 0 2px 0 12px;
    border-radius: 14px;
    background: #f1f3f4;
}

.url {
    flex: 1;
    margin-left: 10px;
    padding: 0;
    border: none;
    outline: none;
    font: 13px "Segoe UI", "Open Sans", sans-serif;
    color: transparent;
    background: linear-gradient(to right, #202124 100px, #5f6368 100px);
    background-clip: text;
}

.bookmarks {
    display: flex;
    flex: none;
    align-items: center;
    height: 32px;
    padding: 0 14px 4px;
    gap: 13px;
}

.bookmarks a {
    display: flex;
    align-items: center;
    gap: 8px;
    color: #3c4043;
    text-decoration: none;
}

/* app */
.app {
    position: relative;
    flex: 1;
    min-height: 0;
    display: flex;
    flex-direction: column;
    font-family: "Trebuchet MS", "Open Sans", sans-serif;
    color: #131722;
    background: #e0e3eb;
    overflow: hidden;
}

.app svg {
    fill: none;
    stroke: currentColor;
}

.app-header {
    display: flex;
    flex: none;
    align-items: center;
    height: 39px;
    padding: 0 5px 0 12px;
    background: #fff;
}

.avatar {
    position: relative;
    width: 28px;
    height: 28px;
    border-radius: 50%;
    background: #6c83af;
    color: #fff;
    font-size: 19px;
    font-weight: bold;
}

.badge {
    position: absolute;
    left: 20px;
    top: -4px;
    width: 18px;
    border-radius: 9px;
    background: #f23645;
    font-size: 11px;
    font-weight: normal;
    line-height: 17px;
}

.symbol {
    gap: 6px;
    margin-left: 24px;
    font-size: 13px;
    font-weight: bold;
    color: #2962ff;
}

.app .symbol svg {
    stroke: none;
}

.add {
    margin: 0 14px 0 23px;
}

.sep {
    width: 1px;
    height: 22px;
    background: #e0e3eb;
}

.interval {
    width: 45px;
    font-size: 14px;
    color: #50535e;
}

.candles {
    width: 46px;
}

.indicators {
    margin-left: 10px;
    font-size: 14px;
    color: #50535e;
}

.app-header .chev {
    margin: 0 9px 0 11px;
}

.app-header .indicators + .chev {
    margin: 0 10px 0 13px;
}

.fav-tools {
    display: flex;
    align-items: center;
    align-self: stretch;
    flex: none;
    width: 520px;
    padding-left: 8px;
    background: #fff;
    border-radius: 6px;
    box-shadow: 0 0 4px rgba(0, 0, 0, .3);
}

.fav-tools button {
    width: 38px;
}

.grip {
    margin: 0 9px 0 0;
}

.layout {
    margin-left: auto;
}

.layout-name {
    margin-left: 15px;
    padding-bottom: 8px;
    font-size: 13px;
    line-height: 16px;
    color: #50535e;
}

.app-header > .layout-name ~ button {
    width: 38px;
}

.app-header > .layout-name ~ .sep {
    margin: 0 4px 0 0;
}

.app-header > button.publish {
    width: 69px;
    height: 28px;
    margin-left: 5px;
    border-radius: 14px;
    background: #2962ff;
    color: #fff;
    font-size: 14px;
}

.app-body {
    display: flex;
    flex: 1;
    min-height: 0;
    padding-top: 4px;
}

.draw-bar {
    width: 52px;
    flex: none;
    margin-right: 4px;
    padding-top: 6px;
    background: #fff;
    border-radius: 0 4px 0 0;
    overflow: hidden;
}

.draw-bar button {
    width: 52px;
    height: 36px;
}

.draw-bar .blue {
    color: #2962ff;
}

hr {
    height: 1px;
    margin: 6px 8px;
    border: none;
    background: #d5dbe4;
}

.chart {
    display: flex;
    flex-direction: column;
    flex: 1;
    min-width: 0;
    margin-right: 4px;
}

.panes {
    position: relative;
    flex: 1;
    min-height: 0;
    overflow: hidden;
    background: #fff;
    border-radius: 4px 4px 0 0;
}

.plot {
    display: block;
}

.rsi {
    stroke-width: 2;
}

.axis {
    font-size: 12px;
    text-anchor: end;
    fill: #131722;
    stroke: none;
}

.currency {
    position: absolute;
    left: 10px;
    top: 4px;
    gap: 3px;
}

.legend {
    position: absolute;
    left: 72px;
    top: 6px;
}

.legend-title {
    font-size: 16px;
    line-height: 22px;
    color: #50535e;
    white-space: nowrap;
}

.quotes {
    display: flex;
    align-items: center;
    gap: 7px;
    margin: 4px 0;
    font-size: 11px;
}

.sell,
.buy {
    width: 62px;
    height: 24px;
    border: 1px solid #f23645;
    border-radius: 4px;
    color: #f23645;
    font-size: 12px;
}

.buy {
    border-color: #2962ff;
    color: #2962ff;
}

.study {
    font-size: 12px;
    line-height: 24px;
    color: #6a6d78;
}

.study b {
    margin: 0 3px 0 12px;
    font-weight: normal;
    color: #4caf50;
}

.rsi-legend {
    position: absolute;
    left: 73px;
    top: 358px;
    line-height: 24px;
}

.rsi-legend span {
    color: #6a6d78;
}

.collapse {
    width: 28px;
    height: 20px;
    border: 1px solid #d1d4dc;
    border-radius: 3px;
    background: #fff;
}

.bottom-bar {
    display: flex;
    align-items: center;
    flex: none;
    height: 40px;
    padding: 0 12px 0 300px;
    gap: 34px;
    background: #fff;
    border-bottom: 1px solid #c5c9d3;
    font-size: 13px;
    color: #50535e;
}

.bottom-bar .up {
    margin-left: auto;
}

.bottom-bar svg:last-child {
    margin-left: -16px;
}

/* watchlist and details */
.widget {
    width: 279px;
    flex: none;
    background: #fff;
    overflow: hidden;
    border-right: 1px solid #d1d4dc;
}

.watch-head {
    display: flex;
    align-items: center;
    height: 48px;
    padding: 0 16px 0 6px;
    font-size: 13px;
    color: #2a2e39;
}

.watch-head b {
    width: 59px;
    text-align: right;
    margin-right: 5px;
}

.watch-head .chev {
    margin-left: 8px;
}

.watch-head .plus {
    margin-left: auto;
}

.watch-head .plus ~ svg {
    margin-left: 18px;
}

.watchlist {
    display: block;
    height: 238px;
    overflow: hidden;
    border-collapse: collapse;
    font-size: 13px;
}

.watchlist th {
    height: 28px;
    padding: 0 8px 0 0;
    border-bottom: 1px solid #e0e3eb;
    font-weight: normal;
    text-align: right;
    color: #6a6d78;
}

.watchlist th:first-child { min-width: 63px; }
.watchlist th:nth-child(2) { min-width: 45px; }
.watchlist th:nth-child(3) { min-width: 43px; }
.watchlist th:nth-child(4) { min-width: 59px; }
.watchlist th:nth-child(5) { min-width: 52px; padding-right: 0; }
.watchlist th:last-child { min-width: 16px; padding: 0; }

.watchlist th svg {
    display: block;
    margin-left: 4px;
}

.watchlist td {
    height: 30px;
    padding: 0 8px 0 0;
    border-bottom: 1px solid #f0f3fa;
    text-align: right;
    max-width: 0;
}

.watchlist td:nth-child(5) {
    padding: 0;
}

.watchlist span {
    display: block;
    overflow: hidden;
    white-space: nowrap;
    line-height: 28px;
}

.watchlist td:nth-child(2) {
    text-align: left;
}

.watchlist tr.cut td {
    height: 16px;
}

.watchlist .cut.top span {
    display: flex;
    align-items: flex-end;
    justify-content: flex-end;
    height: 15px;
}

.watchlist .cut.top td:nth-child(2) span {
    justify-content: flex-start;
}

.watchlist .up { color: #089981; }
.watchlist .down { color: #f23645; }

.watchlist em,
.price em {
    font-style: normal;
    color: #f23645;
}

.watchlist .selected {
    outline: 2px solid #2962ff;
    outline-offset: -2px;
}

.details {
    border-top: 4px solid #e0e3eb;
    padding: 12px 12px 0 16px;
}

.d-head {
    display: flex;
    align-items: center;
    justify-content: space-between;
    padding: 0 4px 0 31px;
    line-height: 24px;
    font-size: 14px;
}

.d-name {
    display: flex;
    align-items: center;
    gap: 5px;
    margin-top: 14px;
    line-height: 18px;
}

.d-name i {
    font-style: normal;
    color: #9598a1;
}

.note {
    width: 100%;
    height: 26px;
    margin-top: 35px;
    gap: 6px;
    border-radius: 4px;
    background: #fff0dc;
    color: #f57c00;
}

.price {
    margin-top: 15px;
    font-size: 29px;
    font-weight: bold;
    line-height: 30px;
}

.price small {
    margin-left: 4px;
    font-size: 12px;
    font-weight: normal;
}

.change {
    font-size: 15px;
    line-height: 20px;
    color: #089981;
}

.market {
    font-size: 11px;
    line-height: 16px;
    color: #089981;
}

.book {
    display: flex;
    gap: 8px;
    margin-top: 12px;
    line-height: 18px;
}

.book span {
    padding: 0 6px;
    border-radius: 9px;
}

.bid { background: #e3ecff; color: #2962ff; }
.ask { background: #fbdde4; color: #f23645; }

.range {
    display: flex;
    justify-content: space-between;
    margin: 12px 4px 0 0;
    line-height: 20px;
}

.range i {
    font-style: normal;
    color: #9598a1;
}

.range-bar {
    display: flex;
    justify-content: flex-end;
    height: 4px;
    margin: 3px 4px 0 0;
    padding-right: 36px;
    background: #e0e3eb;
}

.range-bar i {
    width: 99px;
    background: #089981;
    box-shadow: 0 0 0 2px #fff;
}

.side-bar {
    display: flex;
    flex-direction: column;
    width: 45px;
    flex: none;
    padding-bottom: 2px;
    background: #fff;
    overflow: hidden;
}

.side-bar button {
    position: relative;
    height: 45px;
}

.side-bar button:first-child {
    height: 35px;
    padding-bottom: 11px;
}

.side-bar hr {
    width: 33px;
    margin: 5px auto;
    flex: none;
}

.side-bar .bell {
    margin-top: 4px;
}

.side-bar .last {
    margin-top: auto;
}

.dot {
    position: absolute;
    right: 4px;
    top: 7px;
    width: 14px;
    height: 14px;
    border-radius: 50%;
    background: #f23645;
}

.toast {
    position: absolute;
    left: 16px;
    bottom: 8px;
    width: 400px;
    padding: 12px 12px 25px;
    border-radius: 4px;
    background: #fff;
    box-shadow: 0 2px 4px rgba(0, 0, 0, .3);
    font-size: 13px;
    line-height: 20px;
}

.toast b {
    font-size: 14px;
    font-weight: 600;
}

.toast p {
    margin: 5px 0 8px;
    font-size: 12px;
    line-height: 19px;
    color: #50535e;
}

.toast button {
    height: 26px;
    padding: 0 14px;
    border: 1px solid #2962ff;
    border-radius: 4px;
    color: #2962ff;
}

/* modal */
.backdrop {
    position: absolute;
    inset: 0;
    z-index: 10;
    display: flex;
    align-items: center;
    justify-content: center;
    background: rgba(151, 153, 161, .5);
}

.modal {
    display: flex;
    flex-direction: column;
    width: 840px;
    max-width: 100%;
    height: calc(100% - 41px);
    border-radius: 6px;
    background: #fff;
    box-shadow: 0 2px 4px rgba(0, 0, 0, .4);
}

.modal-header {
    display: flex;
    align-items: center;
    justify-content: space-between;
    height: 69px;
    padding: 0 25px 0 20px;
    border-bottom: 1px solid #e0e3eb;
}

.modal-header h2 {
    margin: 0;
    font-size: 19px;
    font-weight: 600;
}

.search-row {
    display: flex;
    align-items: center;
    height: 41px;
    padding: 0 13px 0 19px;
    border-bottom: 1px solid #e0e3eb;
}

.lens {
    color: #9598a1;
}

.field {
    position: relative;
    flex: 1;
    margin-left: 8px;
}

.field input {
    width: 100%;
    padding: 0;
    border: none;
    outline: none;
    font: 14px "Trebuchet MS", "Open Sans", sans-serif;
    color: #131722;
}

.caret {
    position: absolute;
    left: 8px;
    top: 1px;
    width: 1px;
    height: 18px;
    background: #000;
}

.ops {
    display: flex;
    align-items: center;
    height: 18px;
    padding-left: 5px;
    border-left: 1px solid #e0e3eb;
    color: #a3a6af;
    font-size: 14px;
}

.ops button {
    width: 26px;
}

.pills {
    display: flex;
    gap: 8px;
    padding: 12px 20px 0;
}

.pills button {
    height: 28px;
    padding: 0 12px 2px;
    border-radius: 14px;
    background: #f0f3fa;
    font-size: 15px;
}

.pills .on {
    background: #2962ff;
    color: #fff;
    font-weight: 600;
}

.filters {
    display: flex;
    gap: 42px;
    padding: 14px 22px 0;
    color: #2962ff;
    font-size: 13px;
    line-height: 20px;
}

.filters button {
    gap: 5px;
}

.loading {
    display: flex;
    flex: 1;
    align-items: center;
    justify-content: center;
    padding: 20px 0 0 8px;
}

/* taskbar */
.taskbar {
    display: grid;
    grid-template-columns: 1fr auto 1fr;
    flex: none;
    align-items: center;
    height: 48px;
    padding: 0 19px 0 20px;
    border-top: 1px solid #c8cda0;
    background: linear-gradient(to right, #e8ee90 0, #e7ed95 5%, #dee5b6 8%, #dfe6b0 25%, #e9f199 45%, #e7ef9c 68%, #dce4b8 78%, #dde5b4 85%, #e7ee95 92%, #e6ec98 100%);
    color: #1b1b1b;
    line-height: 16px;
}

.weather {
    display: flex;
    align-items: center;
    gap: 7px;
}

.weather span {
    display: block;
    color: #5c5f45;
}

.task-center {
    display: flex;
    align-items: center;
    padding-left: 10px;
}

.win-search {
    width: 116px;
    height: 30px;
    margin: 0 4px 0 15px;
    gap: 5px;
    border-radius: 15px;
    background: #f4f7e0;
}

.task {
    position: relative;
    width: 40px;
    height: 40px;
    margin: 0 2px;
    border-radius: 4px;
}

.edge {
    background: #fbe5e6;
}

.chrome {
    background: #eef4d2;
}

.edge::after,
.chrome::after,
.excel::after {
    content: "";
    position: absolute;
    bottom: 1px;
    width: 6px;
    height: 3px;
    border-radius: 2px;
    background: #c42b1c;
}

.chrome::after {
    width: 16px;
    background: #0078d4;
}

.excel::after {
    background: #80866a;
}

.tray {
    display: flex;
    align-items: center;
    justify-self: end;
    gap: 8px;
}

.tray svg {
    fill: none;
    stroke: #1b1b1b;
}

.lang {
    width: 40px;
    text-align: center;
}

.clock {
    width: 68px;
    text-align: right;
}
```
